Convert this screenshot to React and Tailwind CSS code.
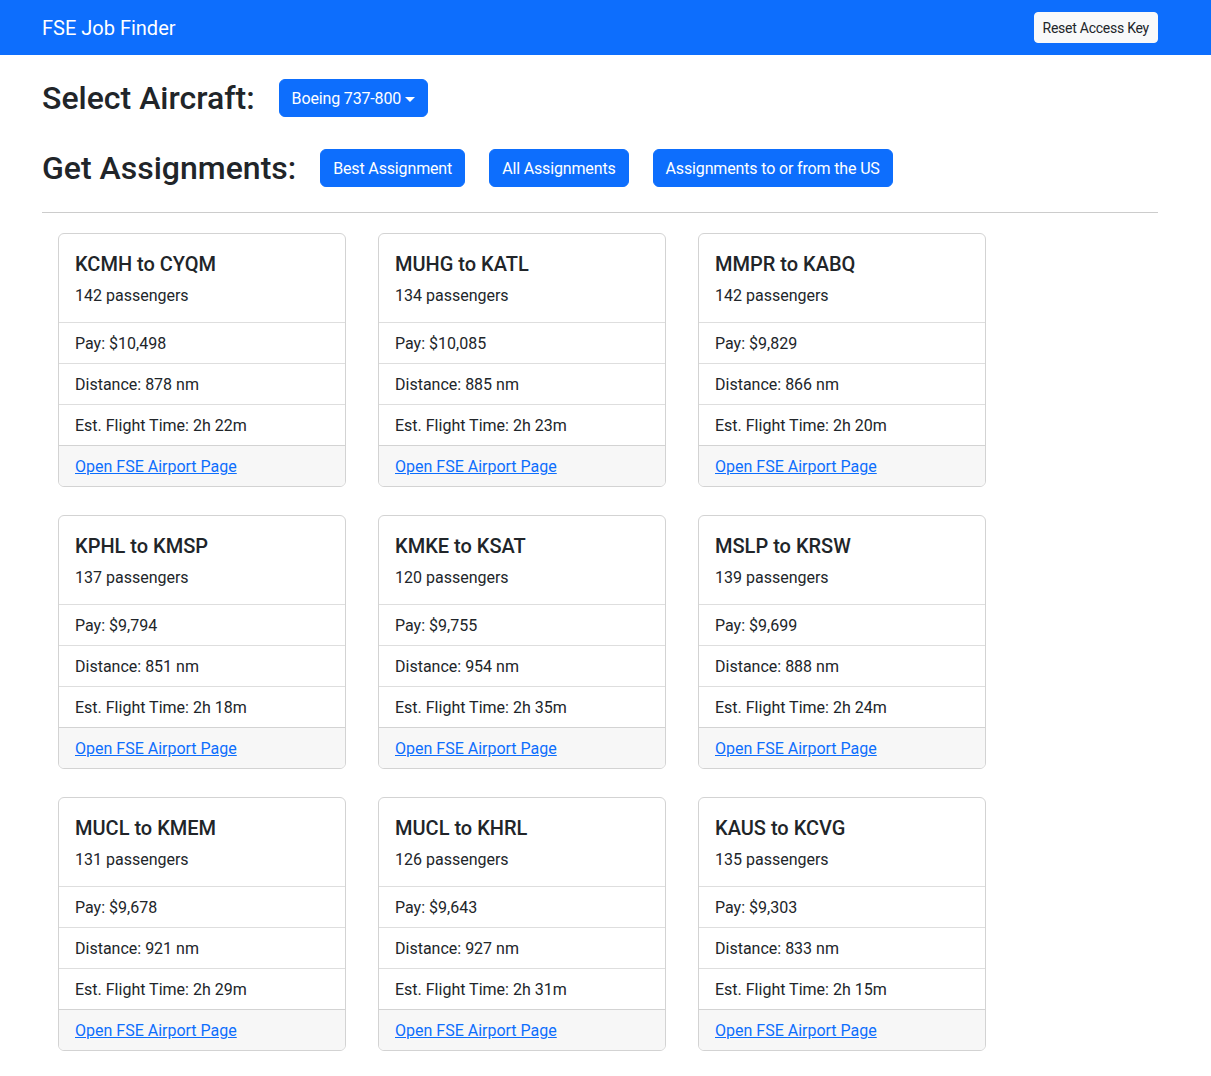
const ASSIGNMENTS = [
  { from: "KCMH", to: "CYQM", pax: 142, pay: "$10,498", dist: 878, time: "2h 22m" },
  { from: "MUHG", to: "KATL", pax: 134, pay: "$10,085", dist: 885, time: "2h 23m" },
  { from: "MMPR", to: "KABQ", pax: 142, pay: "$9,829", dist: 866, time: "2h 20m" },
  { from: "KPHL", to: "KMSP", pax: 137, pay: "$9,794", dist: 851, time: "2h 18m" },
  { from: "KMKE", to: "KSAT", pax: 120, pay: "$9,755", dist: 954, time: "2h 35m" },
  { from: "MSLP", to: "KRSW", pax: 139, pay: "$9,699", dist: 888, time: "2h 24m" },
  { from: "MUCL", to: "KMEM", pax: 131, pay: "$9,678", dist: 921, time: "2h 29m" },
  { from: "MUCL", to: "KHRL", pax: 126, pay: "$9,643", dist: 927, time: "2h 31m" },
  { from: "KAUS", to: "KCVG", pax: 135, pay: "$9,303", dist: 833, time: "2h 15m" },
];

function PrimaryButton({ children }) {
  return (
    <button className="flex items-center rounded-md border border-[#0d6efd] bg-[#0d6efd] px-3 pt-[7px] pb-[5px] text-[16px] leading-6 tracking-[-0.15px] text-white">
      {children}
    </button>
  );
}

function AssignmentCard({ a }) {
  return (
    <div className="w-[288px] overflow-hidden rounded-md border border-[#d3d3d3] bg-white">
      <div className="px-4 pt-[18px] pb-[14px]">
        <h5 className="mb-2 text-[20px] font-medium leading-[1.2]">
          {a.from} to {a.to}
        </h5>
        <p className="leading-6">{a.pax} passengers</p>
      </div>
      <ul>
        <li className="border-t border-[#dedede] px-4 pt-[9px] pb-[7px] leading-6">Pay: {a.pay}</li>
        <li className="border-t border-[#dedede] px-4 pt-[9px] pb-[7px] leading-6">Distance: {a.dist} nm</li>
        <li className="border-t border-[#dedede] px-4 pt-[9px] pb-[7px] leading-6">Est. Flight Time: {a.time}</li>
      </ul>
      <div className="border-t border-[#d3d3d3] bg-[#f7f7f7] px-4 pt-[9px] pb-[7px] leading-6">
        <a href="#" className="text-[#0d6efd] underline">
          Open FSE Airport Page
        </a>
      </div>
    </div>
  );
}

export default function App() {
  return (
    <div className="min-h-[1076px] bg-white text-[16px] text-[#212529]" style={{ fontFamily: "Roboto, sans-serif" }}>
      {/* Navbar */}
      <nav className="h-[55px] bg-[#0d6efd]">
        <div className="ml-[42px] flex h-full w-[1116px] items-center justify-between">
          <span className="text-[20px] text-white">FSE Job Finder</span>
          <button className="rounded border border-[#f8f9fa] bg-[#f8f9fa] px-2 pt-[5px] pb-[3px] text-[14px] leading-[21px] tracking-[-0.25px] text-[#212529]">
            Reset Access Key
          </button>
        </div>
      </nav>

      <main className="ml-[42px] w-[1116px]">
        <div className="mt-6 flex h-[38px] items-center">
          <h2 className="text-[32px] font-medium leading-[38px]">Select Aircraft:</h2>
          <div className="ml-6">
            <PrimaryButton>
              Boeing 737-800
              <span className="ml-[4px] inline-block h-0 w-0 border-x-[5px] border-t-[5px] border-x-transparent border-t-white" />
            </PrimaryButton>
          </div>
        </div>

        <div className="mt-8 flex h-[38px] items-center gap-6">
          <h2 className="text-[32px] font-medium leading-[38px]">Get Assignments:</h2>
          <PrimaryButton>Best Assignment</PrimaryButton>
          <PrimaryButton>All Assignments</PrimaryButton>
          <PrimaryButton>Assignments to or from the US</PrimaryButton>
        </div>

        <hr className="mt-[25px] border-t border-[#cccccc]" />

        <div className="ml-4 mt-5 flex flex-wrap gap-x-8 gap-y-7">
          {ASSIGNMENTS.map((a, i) => (
            <AssignmentCard key={i} a={a} />
          ))}
        </div>
      </main>
    </div>
  );
}
